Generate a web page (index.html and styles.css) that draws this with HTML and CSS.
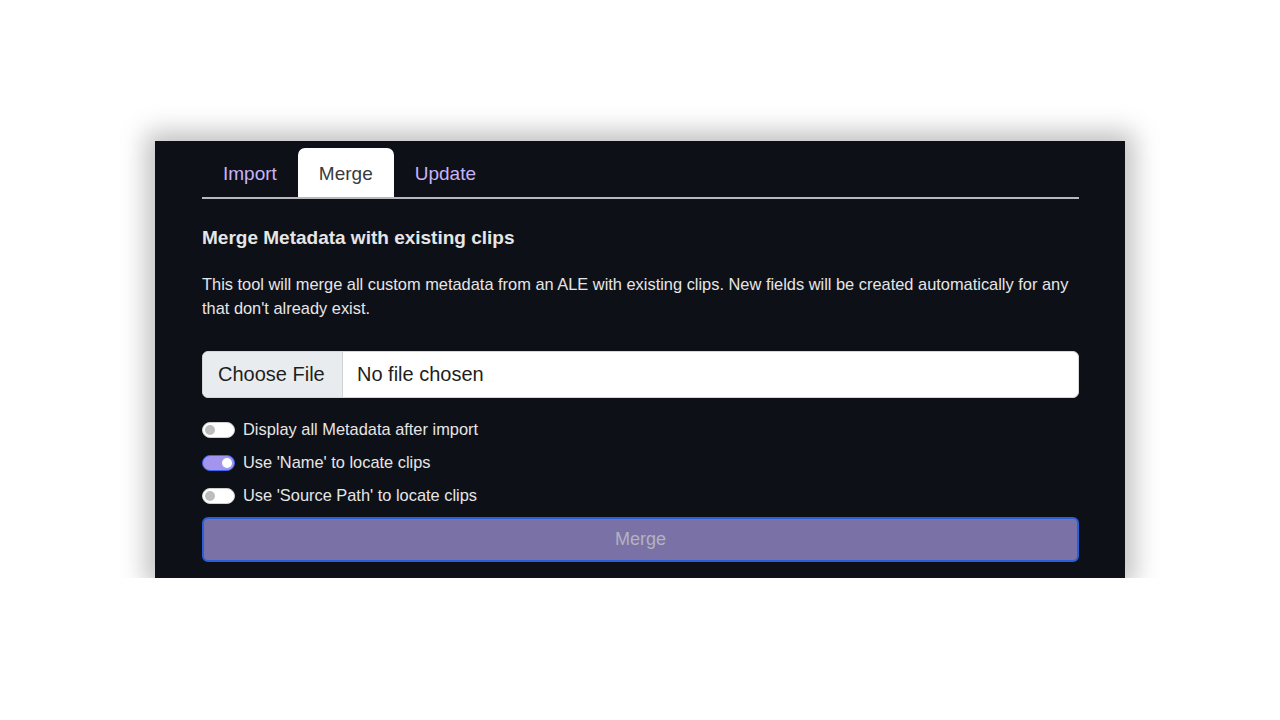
FILE: index.html
```html
<!DOCTYPE html>
<html lang="en">
<head>
<meta charset="utf-8">
<title>Merge Metadata</title>
<link rel="stylesheet" href="styles.css">
</head>
<body>
<main class="page">
  <section class="panel">
    <nav class="tabs">
      <a class="tab">Import</a>
      <a class="tab active">Merge</a>
      <a class="tab">Update</a>
    </nav>
    <h2 class="title">Merge Metadata with existing clips</h2>
    <p class="desc">This tool will merge all custom metadata from an ALE with existing clips. New fields will be created automatically for any that don't already exist.</p>
    <div class="file">
      <span class="file-btn">Choose File</span>
      <span class="file-name">No file chosen</span>
    </div>
    <div class="options">
      <label class="opt"><span class="switch"></span><span>Display all Metadata after import</span></label>
      <label class="opt"><span class="switch on"></span><span>Use 'Name' to locate clips</span></label>
      <label class="opt"><span class="switch"></span><span>Use 'Source Path' to locate clips</span></label>
    </div>
    <button class="merge">Merge</button>
  </section>
</main>
</body>
</html>
```

FILE: styles.css
```css
* { box-sizing: border-box; }
html, body { margin: 0; padding: 0; background: #ffffff; }
body { font-family: "Liberation Sans", Arial, sans-serif; }
.page { padding-top: 141px; }
.panel {
  width: 970px;
  height: 437px;
  margin: 0 auto;
  background: #0e1018;
  padding: 7px 46px 0 47px;
  box-shadow: 0 0 24px 9px rgba(0,0,0,0.25);
  color: #e4e4e4;
}
.tabs {
  display: flex;
  border-bottom: 2px solid #b9b9bd;
  height: 51px;
}
.tab {
  display: flex;
  align-items: center;
  padding: 2px 21px 0;
  height: 49px;
  font-size: 19px;
  color: #c6b4fa;
  border-radius: 7px 7px 0 0;
}
.tab.active { background: #ffffff; color: #3a3a3a; }
.title {
  margin: 28px 0 0;
  font-size: 19px;
  line-height: 22px;
  font-weight: bold;
  color: #e6e6e6;
}
.desc {
  margin: 23px 0 0;
  font-size: 16.4px;
  line-height: 24px;
  color: #e6e6e6;
}
.file {
  margin-top: 31px;
  height: 47px;
  display: flex;
  background: #ffffff;
  border: 1px solid #d4d6da;
  border-radius: 6px;
  overflow: hidden;
  font-size: 20px;
  color: #1e1e1e;
}
.file-btn {
  display: flex;
  align-items: center;
  padding: 0 15px;
  width: 140px;
  background: #e9ecef;
  border-right: 1px solid #d0d3d8;
}
.file-name { display: flex; align-items: center; padding-left: 14px; }
.options {
  margin-top: 15px;
  display: flex;
  flex-direction: column;
}
.opt {
  display: flex;
  align-items: center;
  gap: 8px;
  height: 33px;
  font-size: 16.4px;
  color: #e6e6e6;
}
.switch {
  position: relative;
  width: 33px;
  height: 16px;
  border-radius: 8px;
  background: #ffffff;
  border: 1px solid #cfcfcf;
  flex: none;
}
.switch::after {
  content: "";
  position: absolute;
  left: 2px;
  top: 2px;
  width: 10px;
  height: 10px;
  border-radius: 50%;
  background: #bdbdbd;
}
.switch.on { background: #a394ee; border: 1px solid #3b66f0; }
.switch.on::after { left: auto; right: 2px; background: #ffffff; }
.merge {
  display: block;
  width: 100%;
  margin-top: 5px;
  height: 45px;
  background: #7a72a6;
  border: 2px solid #2b5fd9;
  border-radius: 6px;
  font-family: "Liberation Sans", Arial, sans-serif;
  font-size: 18px;
  color: #b4b2bf;
}
```
